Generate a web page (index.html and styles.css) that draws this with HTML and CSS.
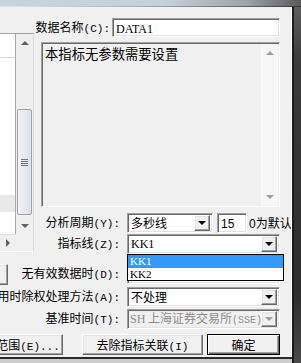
FILE: index.html
```html
<!DOCTYPE html>
<html lang="zh-CN">
<head>
    <meta charset="UTF-8">
    <meta name="viewport" content="width=device-width, initial-scale=1.0">
    <title>指标参数设置</title>
    <link rel="stylesheet" href="styles.css">
</head>
<body>
    <div class="strip"></div>
    <div class="topline"></div>

    <div class="frame">
        <div class="window">
            <div class="dialog">
                <div class="upper">
                    <!-- 左侧列表(被截断) -->
                    <div class="leftpane">
                        <div class="list">
                            <div class="list-head"></div>
                            <div class="list-row"></div>
                        </div>
                        <div class="vscroll">
                            <span class="sb-btn"><i class="tri up"></i></span>
                            <div class="track">
                                <div class="thumb"><span class="grip"></span></div>
                            </div>
                            <span class="sb-btn"><i class="tri down"></i></span>
                        </div>
                        <div class="hscroll"><span class="sb-btn"><i class="tri right"></i></span></div>
                        <div class="corner"></div>
                    </div>

                    <div class="main">
                        <div class="name-row">
                            <label class="lbl name-lbl">数据名称<span class="key">(C):</span></label>
                            <div class="field name-field"><span class="lat">DATA1</span></div>
                        </div>

                        <div class="memo">
                            <div class="memo-text">本指标无参数需要设置</div>
                            <div class="memo-scroll">
                                <span class="sb-btn"><i class="tri up off"></i></span>
                                <span class="sb-btn"><i class="tri down off"></i></span>
                            </div>
                        </div>

                        <div class="form-row r1">
                            <label class="lbl w86">分析周期<span class="key">(Y):</span></label>
                            <div class="field combo period">
                                <span class="val">多秒线</span>
                                <span class="dd"><i class="tri down"></i></span>
                            </div>
                            <div class="field num"><span class="sans">15</span></div>
                            <span class="hint"><span class="sans">0</span>为默认</span>
                        </div>

                        <div class="form-row r2">
                            <label class="lbl w86">指标线<span class="key">(Z):</span></label>
                            <div class="field combo wide">
                                <span class="val lat">KK1</span>
                                <span class="dd"><i class="tri down"></i></span>
                            </div>
                            <!-- 展开的下拉列表 -->
                            <ul class="droplist">
                                <li class="sel">KK1</li>
                                <li>KK2</li>
                            </ul>
                        </div>
                    </div>
                </div>

                <div class="lower">
                    <div class="form-row r3">
                        <span class="btn stub"></span>
                        <label class="lbl w112">无有效数据时<span class="key">(D):</span></label>
                        <div class="field combo wide"></div>
                    </div>
                    <div class="form-row r4">
                        <label class="lbl w120">用时除权处理方法<span class="key">(A):</span></label>
                        <div class="field combo wide">
                            <span class="val">不处理</span>
                            <span class="dd"><i class="tri down"></i></span>
                        </div>
                    </div>
                    <div class="form-row r5">
                        <label class="lbl w120">基准时间<span class="key">(T):</span></label>
                        <div class="field combo wide disabled">
                            <span class="val"><span class="lat">SH</span> 上海证券交易所<span class="key">(SSE)</span></span>
                            <span class="dd"><i class="tri down off"></i></span>
                        </div>
                    </div>

                    <div class="buttons">
                        <button class="btn range">范围<span class="key">(E)...</span></button>
                        <button class="btn unlink">去除指标关联<span class="key">(I)</span></button>
                        <button class="btn ok">确定</button>
                    </div>
                </div>
            </div>
            <div class="bline"></div>
        </div>
        <div class="outside"></div>
    </div>
</body>
</html>
```

FILE: styles.css
```css
* {
    box-sizing: border-box;
}
html, body {
    margin: 0;
    padding: 0;
}
body {
    width: 301px;
    height: 363px;
    overflow: hidden;
    font-family: "Noto Sans CJK SC", "Noto Sans", sans-serif;
    font-size: 12px;
    line-height: 14px;
    color: #000;
    background: #2e2e2e;
}

/* background above the dialog */
.strip {
    height: 6px;
    background: linear-gradient(to right, #c6d4e2 0%, #c3d1de 55%, #9da3a9 82%, #5a5a5a 100%);
}
.topline {
    height: 1px;
    background: linear-gradient(to right, #e4e9ee 0%, #a8a8a8 50%, #353535 100%);
}
.frame {
    display: flex;
    height: 356px;
}
.window {
    width: 292px;
    background: #cdcdcd;
}
.dialog {
    height: 350px;
    background: #f0f0f0;
    border-right: 1px solid #fcfcfc;
    overflow: hidden;
}
.bline {
    height: 2px;
    background: #2a2a2a;
}
.outside {
    flex: 1;
    border-left: 2px solid #1c1c1c;
    background: linear-gradient(to bottom, #5e5e5e 0%, #3b3b3b 15%, #2c2c2c 80%, #4a4a4a 100%);
}

/* fonts */
.lat {
    font-family: "Liberation Serif", serif;
    font-size: 12px;
}
.sans {
    font-family: "Liberation Sans", sans-serif;
    font-size: 12px;
}
.key {
    font-family: "Liberation Mono", monospace;
    font-size: 11px;
}

/* shared 3d borders */
.field {
    background: #fff;
    border: 1px solid;
    border-color: #a0a0a0 #fff #fff #a0a0a0;
    box-shadow: inset 1px 1px 0 #696969, inset -1px -1px 0 #e3e3e3;
}
.btn, .dd, .sb-btn {
    background: #f0f0f0;
    border: 1px solid;
    border-color: #fff #696969 #696969 #fff;
    box-shadow: inset -1px -1px 0 #a0a0a0, inset 1px 1px 0 #e3e3e3;
}

/* small triangles */
.tri {
    display: block;
    width: 0;
    height: 0;
    border: 4px solid transparent;
}
.tri.up {
    border-top: 0;
    border-bottom: 4px solid #000;
}
.tri.down {
    border-bottom: 0;
    border-top: 4px solid #000;
}
.tri.right {
    border-right: 0;
    border-left: 4px solid #000;
}
.tri.off.up {
    border-bottom-color: #a0a0a0;
}
.tri.off.down {
    border-top-color: #a0a0a0;
}

/* layout */
.upper {
    display: flex;
    align-items: flex-start;
    height: 247px;
}
.main {
    flex: 1;
}

/* left list panel */
.leftpane {
    width: 34px;
    height: 219px;
    margin-top: 26px;
    border-top: 1px solid #a0a0a0;
    border-right: 1px solid #dadada;
    border-bottom: 1px solid #fff;
    display: grid;
    grid-template-columns: 16px 17px;
    grid-template-rows: 1fr 17px;
}
.list {
    background: #fff;
    border-right: 1px solid #a8a8a8;
}
.list-head {
    height: 24px;
    border-bottom: 1px solid #d6d6d6;
}
.list-row {
    height: 17px;
    margin-top: 137px;
    background: #e9e9e9;
}
.vscroll {
    display: flex;
    flex-direction: column;
    background: #efefef;
}
.vscroll .sb-btn, .hscroll .sb-btn {
    height: 17px;
    display: flex;
    align-items: center;
    justify-content: center;
    border-color: #efefef;
    box-shadow: none;
    background: #efefef;
}
.vscroll .tri.up {
    border-bottom-color: #606060;
}
.vscroll .tri.down {
    border-top-color: #606060;
}
.hscroll .tri.right {
    border-left-color: #606060;
}
.track {
    flex: 1;
    padding: 58px 0 0 1px;
}
.thumb {
    width: 15px;
    height: 106px;
    border: 1px solid #9ca3ad;
    border-radius: 2px;
    background: linear-gradient(to right, #f2f2f2, #dce1e8);
    display: flex;
    align-items: center;
    justify-content: center;
}
.grip {
    width: 7px;
    height: 7px;
    background: repeating-linear-gradient(to bottom, #6e747c 0 1px, transparent 1px 2px);
}
.hscroll {
    background: #efefef;
    border-top: 1px solid #e2e2e2;
}
.hscroll .sb-btn {
    width: 15px;
    height: 16px;
}
.corner {
    background: #f0f0f0;
}

/* name row */
.name-row {
    display: flex;
    align-items: center;
    margin-top: 11px;
    height: 19px;
}
.lbl {
    display: flex;
    align-items: baseline;
    justify-content: flex-end;
    white-space: nowrap;
    flex-shrink: 0;
}
.name-lbl {
    width: 76px;
    margin-right: 2px;
}
.name-field {
    width: 168px;
    height: 19px;
    padding: 2px 0 0 3px;
    line-height: 14px;
}

/* memo box */
.memo {
    margin: 5px 0 0 7px;
    width: 239px;
    height: 165px;
    display: flex;
    border: 1px solid;
    border-color: #a0a0a0 #fff #fff #a0a0a0;
    box-shadow: inset 1px 1px 0 #696969;
    background: #f0f0f0;
}
.memo-text {
    flex: 1;
    padding: 3px 0 0 3px;
    font-size: 13.33px;
    line-height: 16px;
}
.memo-scroll {
    width: 17px;
    margin: 1px 1px 1px 0;
    border-left: 1px solid #fafafa;
    background: #f6f6f6;
    display: flex;
    flex-direction: column;
    justify-content: space-between;
}
.memo-scroll .sb-btn {
    height: 17px;
    display: flex;
    align-items: center;
    justify-content: center;
    border: 0;
    box-shadow: none;
    background: transparent;
}

/* form rows */
.form-row {
    display: flex;
    align-items: center;
    height: 20px;
}
.w86 {
    width: 86px;
    margin-right: 7px;
}
.w112 {
    width: 112px;
    margin-right: 7px;
}
.w120 {
    width: 120px;
    margin-right: 7px;
}
.r1 {
    margin-top: 6px;
}
.r2 {
    margin-top: 1px;
    position: relative;
}
.r3 {
    margin-top: 10px;
}
.r4 {
    margin-top: 3px;
}
.r5 {
    margin-top: 2px;
}
.combo {
    height: 20px;
    display: flex;
    align-items: center;
    padding: 0 2px 0 3px;
    flex-shrink: 0;
}
.combo .val {
    flex: 1;
    white-space: nowrap;
}
.period {
    width: 86px;
}
.wide {
    width: 153px;
}
.dd {
    width: 16px;
    height: 16px;
    display: flex;
    align-items: center;
    justify-content: center;
    flex-shrink: 0;
}
.num {
    width: 30px;
    height: 20px;
    margin-left: 4px;
    padding: 2px 0 0 3px;
    flex-shrink: 0;
}
.hint {
    margin-left: 2px;
    white-space: nowrap;
}
.disabled {
    background: #f0f0f0;
    color: #8c8c8c;
    padding-left: 2px;
}
.disabled .val {
    min-width: 0;
}
.disabled .key {
    font-size: 10px;
}

/* open dropdown list */
.droplist {
    position: absolute;
    left: 93px;
    top: 20px;
    width: 157px;
    height: 27px;
    margin: 0;
    padding: 0;
    list-style: none;
    background: #fff;
    border: 1px solid #000;
    font-family: "Liberation Serif", serif;
    font-size: 11px;
    z-index: 2;
}
.droplist li {
    height: 12px;
    line-height: 12px;
    padding-left: 2px;
}
.droplist li.sel {
    height: 13px;
    line-height: 13px;
    background: #3399ff;
    color: #fff;
}

/* stub of a clipped button on the left */
.stub {
    width: 18px;
    height: 17px;
    margin-left: -10px;
    flex-shrink: 0;
}

/* buttons */
.buttons {
    display: flex;
    margin-top: 5px;
}
.btn {
    height: 21px;
    padding: 0;
    font-family: inherit;
    font-size: 12px;
    line-height: 14px;
    color: #000;
    display: flex;
    align-items: baseline;
    justify-content: center;
    white-space: nowrap;
    flex-shrink: 0;
}
.buttons .btn {
    padding-top: 3px;
}
.range {
    width: 70px;
    margin-left: -7px;
}
.unlink {
    width: 121px;
    margin-left: 19px;
}
.ok {
    width: 73px;
    margin-left: 4px;
    border: 1px solid #000;
    box-shadow: inset 1px 1px 0 #fff, inset -1px -1px 0 #696969, inset -2px -2px 0 #a0a0a0;
}
```
